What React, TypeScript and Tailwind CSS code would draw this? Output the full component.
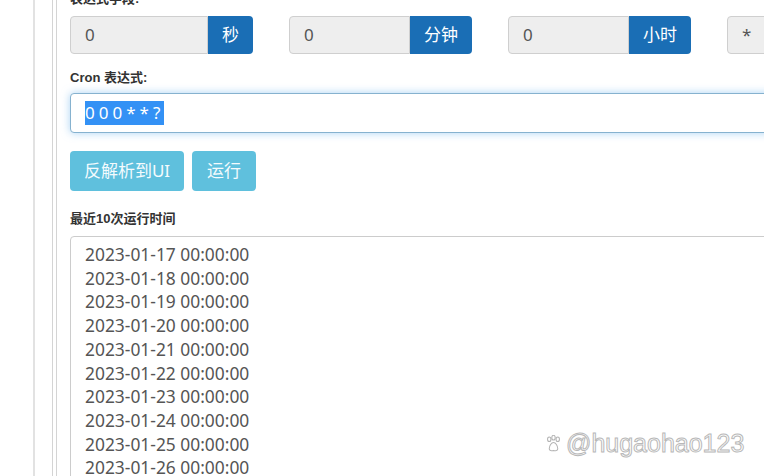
import React from "react";

const times = [
  "2023-01-17 00:00:00",
  "2023-01-18 00:00:00",
  "2023-01-19 00:00:00",
  "2023-01-20 00:00:00",
  "2023-01-21 00:00:00",
  "2023-01-22 00:00:00",
  "2023-01-23 00:00:00",
  "2023-01-24 00:00:00",
  "2023-01-25 00:00:00",
  "2023-01-26 00:00:00",
];

const font = "font-['Noto_Sans','Noto_Sans_CJK_SC',sans-serif]";
const labelFont = "font-['Liberation_Sans','Noto_Sans_CJK_SC',sans-serif]";

function Group({ value, unit, width }: { value: string; unit?: string; width: string }) {
  return (
    <div className={`flex h-[38px] ${width} shrink-0`}>
      <div
        className={`flex flex-1 items-center rounded-l-[4px] border border-[#cfcfcf] bg-[#eeeeee] pl-[14px] text-[17px] text-[#555] ${font} ${unit ? "" : "rounded-r-[4px]"}`}
      >
        {value}
      </div>
      {unit && (
        <div
          className={`flex items-center rounded-r-[4px] bg-[#1a6eb5] px-[14px] text-[17px] text-white ${font}`}
        >
          {unit}
        </div>
      )}
    </div>
  );
}

export default function App() {
  return (
    <div className="relative h-[476px] w-[764px] overflow-hidden bg-white">
      <div className="flex h-full">
        <div className="w-[35px] shrink-0 border-r-2 border-[#e2e2e2]" />
        <div className="w-[18px] shrink-0 border-r border-[#d4d4d4]" />
        <div className="ml-[3px] flex-1 border-l border-[#d4d4d4] pl-[13px]">
          <div className="mt-[-10px] flex w-[820px] flex-col">
            <div className={`h-[18px] text-[13px] font-bold leading-[18px] text-[#333] ${labelFont}`}>
              表达式字段:
            </div>
            <div className="mt-[8px] flex gap-9">
              <Group value="0" unit="秒" width="w-[183px]" />
              <Group value="0" unit="分钟" width="w-[183px]" />
              <Group value="0" unit="小时" width="w-[183px]" />
              <Group value="*" width="w-[183px]" />
            </div>
            <div className={`mt-[15px] h-[18px] text-[13px] font-bold leading-[18px] text-[#333] ${labelFont}`}>
              Cron 表达式:
            </div>
            <div className="mt-[6px] flex h-[40px] items-center rounded-[4px] border border-[#86b2cf] bg-white pl-[14px] shadow-[0_0_8px_rgba(102,175,233,0.55)]">
              <span
                className={`bg-[#3391f5] text-[17px] leading-[24px] tracking-[4px] text-white ${font}`}
              >
                000**?
              </span>
            </div>
            <div className="mt-[18px] flex gap-[8px]">
              <button
                className={`flex h-[40px] w-[114px] items-center justify-center rounded-[4px] bg-[#5fc0dd] text-[17px] text-[#f4fbfd] ${font}`}
              >
                反解析到UI
              </button>
              <button
                className={`flex h-[40px] w-[64px] items-center justify-center rounded-[4px] bg-[#5fc0dd] text-[17px] text-[#f4fbfd] ${font}`}
              >
                运行
              </button>
            </div>
            <div className={`mt-[19px] h-[18px] text-[13px] font-bold leading-[18px] text-[#333] ${labelFont}`}>
              最近10次运行时间
            </div>
            <div className="mt-[8px] rounded-[4px] border border-[#cccccc] pl-[14px] pt-[6px]">
              {times.map((t) => (
                <div key={t} className={`text-[17.4px] leading-[23.7px] text-[#555] ${font}`}>
                  {t}
                </div>
              ))}
            </div>
          </div>
        </div>
      </div>
      <div className="absolute left-[546px] top-[428px] flex items-center gap-[5px]">
        <svg width="15" height="17" viewBox="0 0 14 16" fill="none" stroke="#b5b5b5" strokeWidth="1">
          <ellipse cx="3" cy="4" rx="1.6" ry="2.2" />
          <ellipse cx="7" cy="2.5" rx="1.6" ry="2.2" />
          <ellipse cx="11" cy="4" rx="1.6" ry="2.2" />
          <path d="M3 13c0-3 2-6 4-6s4 3 4 6c0 2-2 2-4 1.5C5 15 3 15 3 13z" />
        </svg>
        <span className="font-['Liberation_Sans',sans-serif] text-[25px] leading-[30px] text-white [-webkit-text-stroke:1px_#b8b8b8]">
          @hugaohao123
        </span>
      </div>
    </div>
  );
}
